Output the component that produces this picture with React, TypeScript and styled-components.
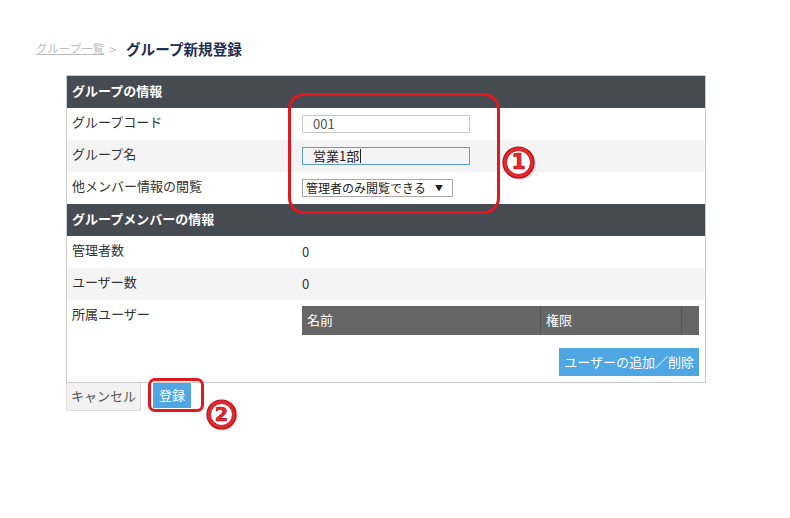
import React from 'react';
import styled, { createGlobalStyle } from 'styled-components';

const GlobalStyle = createGlobalStyle`
  html, body {
    margin: 0;
    padding: 0;
    background: #ffffff;
  }
  body {
    font-family: "Noto Sans CJK JP", "Noto Sans", sans-serif;
    font-size: 13px;
    color: #333333;
  }
`;

const Page = styled.div`
  width: 790px;
  height: 518px;
  padding: 40px 0 0 36px;
  box-sizing: border-box;
`;

const Breadcrumb = styled.div`
  display: flex;
  align-items: center;
  height: 18px;
  line-height: 1;

  a {
    color: #bdbdbd;
    text-decoration: underline;
    font-size: 11.5px;
  }

  span.sep {
    color: #bdbdbd;
    font-size: 12px;
    margin: 0 10px 0 5px;
  }

  strong {
    color: #1d2f55;
    font-weight: bold;
    font-size: 14.6px;
  }
`;

const Stage = styled.div`
  position: relative;
  margin: 17px 0 0 30px;
  width: 640px;
`;

const Panel = styled.div`
  border: 1px solid #cccccc;
  background: #ffffff;
`;

const SectionHead = styled.div`
  height: 32px;
  box-sizing: border-box;
  display: flex;
  align-items: center;
  padding: 0 0 4px 5px;
  line-height: 1;
  background: #464a51;
  color: #ffffff;
  font-weight: bold;
  font-size: 13px;
`;

const Row = styled.div<{ $alt?: boolean; $top?: boolean }>`
  display: grid;
  grid-template-columns: 235px 1fr;
  align-items: ${({ $top }) => ($top ? 'start' : 'center')};
  min-height: 32px;
  background: ${({ $alt }) => ($alt ? '#f4f4f4' : '#ffffff')};
`;

const Label = styled.div<{ $top?: boolean }>`
  padding-left: 5px;
  padding-top: ${({ $top }) => ($top ? '7px' : '0')};
  padding-bottom: ${({ $top }) => ($top ? '0' : '3px')};
  line-height: 1.1;
  color: #333333;
`;

const Value = styled.div`
  padding-right: 5px;
  color: #333333;
  line-height: 1.1;
`;

const TextInput = styled.div<{ $focus?: boolean }>`
  width: 168px;
  height: 18px;
  box-sizing: border-box;
  border: 1px solid ${({ $focus }) => ($focus ? '#5c9ad6' : '#c8c8c8')};
  padding: 0 0 1px 10px;
  display: flex;
  align-items: center;
  font-size: 13px;
  line-height: 1;
  color: ${({ $focus }) => ($focus ? '#222' : '#555')};

  i {
    display: inline-block;
    width: 1px;
    height: 14px;
    background: #222;
    margin-left: 1px;
  }
`;

const Select = styled.div`
  width: 151px;
  height: 18px;
  box-sizing: border-box;
  border: 1px solid #a9a9a9;
  padding: 0 9px 1px 3px;
  display: flex;
  align-items: center;
  justify-content: space-between;
  white-space: nowrap;
  line-height: 1;
  color: #222;
  font-size: 12px;

  b {
    font-size: 8px;
    font-weight: normal;
  }
`;

const Members = styled.div`
  padding: 6px 6px 6px 0;
  display: flex;
  flex-direction: column;
  align-items: flex-end;
  gap: 13px;
`;

const MemberTable = styled.div`
  width: 100%;
  display: grid;
  grid-template-columns: 239px 141px 1fr;
  height: 29px;
  background: #666666;
  color: #ffffff;
  line-height: 1;

  div {
    display: flex;
    align-items: center;
    padding: 0 0 2px 5px;
    border-right: 1px solid #555555;
  }

  div:last-child {
    border-right: none;
  }
`;

const BlueButton = styled.div<{ $small?: boolean }>`
  display: flex;
  align-items: center;
  justify-content: center;
  background: #4ea6e2;
  color: #ffffff;
  line-height: 1;
  height: ${({ $small }) => ($small ? '25px' : '28px')};
  padding: 0 ${({ $small }) => ($small ? '6px' : '5px')} 2px;
  box-sizing: border-box;
`;

const Actions = styled.div`
  display: flex;
  align-items: flex-start;
  gap: 12px;
`;

const CancelButton = styled.div`
  height: 28px;
  width: 75px;
  box-sizing: border-box;
  border: 1px solid #dddddd;
  border-top: none;
  background: #f1f1f1;
  color: #555555;
  line-height: 1;
  padding-bottom: 2px;
  display: flex;
  align-items: center;
  justify-content: center;
`;

const Mark = styled.div<{ $l: number; $t: number; $w: number; $h: number; $r: number }>`
  position: absolute;
  left: ${({ $l }) => $l}px;
  top: ${({ $t }) => $t}px;
  width: ${({ $w }) => $w}px;
  height: ${({ $h }) => $h}px;
  border: 3px solid #e01820;
  border-radius: ${({ $r }) => $r}px;
  box-sizing: border-box;
  pointer-events: none;
`;

const NumBadge = styled.svg<{ $l: number; $t: number }>`
  position: absolute;
  left: ${({ $l }) => $l}px;
  top: ${({ $t }) => $t}px;
  overflow: visible;
`;

const Num = ({ n, l, t, size }: { n: string; l: number; t: number; size: number }) => {
  const c = size / 2;
  return (
    <NumBadge $l={l} $t={t} width={size} height={size} viewBox={`0 0 ${size} ${size}`}>
      <circle cx={c + 1.5} cy={c + 1.5} r={c - 0.5} fill="#9a9a9a" opacity={0.35} />
      <circle cx={c} cy={c} r={c - 1} fill="#e8262c" stroke="#a8161a" strokeWidth={1.2} />
      <circle cx={c} cy={c} r={c - 4.5} fill="#ffffff" stroke="#b91c20" strokeWidth={1} />
      <text
        x={c}
        y={c + size * 0.21}
        textAnchor="middle"
        fontFamily='"DejaVu Sans", sans-serif'
        fontWeight="bold"
        fontSize={size * 0.62}
        fill="#e8262c"
        stroke="#b01418"
        strokeWidth={0.7}
      >
        {n}
      </text>
    </NumBadge>
  );
};

export default function App() {
  return (
    <Page>
      <GlobalStyle />
      <Breadcrumb>
        <a>グループ一覧</a>
        <span className="sep">&gt;</span>
        <strong>グループ新規登録</strong>
      </Breadcrumb>

      <Stage>
        <Panel>
          <SectionHead>グループの情報</SectionHead>
          <Row>
            <Label>グループコード</Label>
            <Value>
              <TextInput>001</TextInput>
            </Value>
          </Row>
          <Row $alt>
            <Label>グループ名</Label>
            <Value>
              <TextInput $focus>
                営業1部<i />
              </TextInput>
            </Value>
          </Row>
          <Row>
            <Label>他メンバー情報の閲覧</Label>
            <Value>
              <Select>
                <span>管理者のみ閲覧できる</span>
                <b>▼</b>
              </Select>
            </Value>
          </Row>
          <SectionHead>グループメンバーの情報</SectionHead>
          <Row>
            <Label>管理者数</Label>
            <Value>0</Value>
          </Row>
          <Row $alt>
            <Label>ユーザー数</Label>
            <Value>0</Value>
          </Row>
          <Row $top>
            <Label $top>所属ユーザー</Label>
            <Members>
              <MemberTable>
                <div>名前</div>
                <div>権限</div>
                <div />
              </MemberTable>
              <BlueButton>ユーザーの追加／削除</BlueButton>
            </Members>
          </Row>
        </Panel>

        <Actions>
          <CancelButton>キャンセル</CancelButton>
          <BlueButton $small>登録</BlueButton>
        </Actions>

        <Mark $l={222} $t={18} $w={212} $h={121} $r={16} />
        <Num n="1" l={436} t={71} size={33} />
        <Mark $l={82} $t={303} $w={56} $h={34} $r={7} />
        <Num n="2" l={140} t={324} size={31} />
      </Stage>
    </Page>
  );
}
